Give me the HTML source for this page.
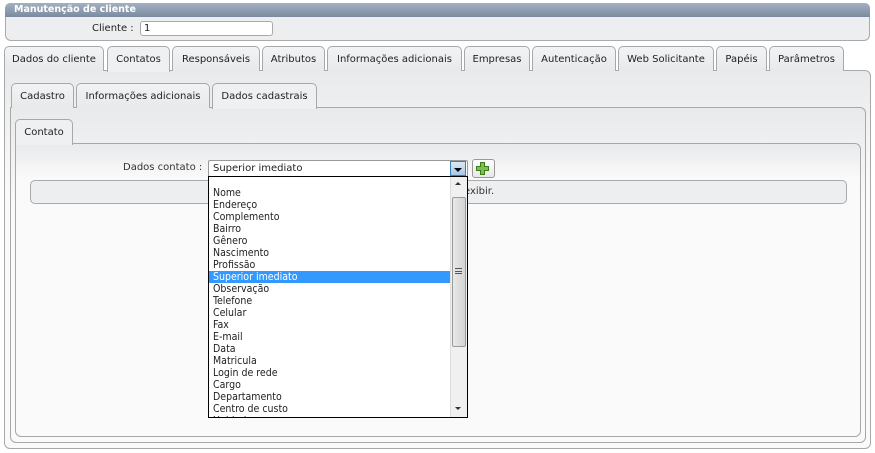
<!DOCTYPE html>
<html><head><meta charset="utf-8"><style>
*{box-sizing:border-box;margin:0;padding:0}
body{width:875px;height:453px;background:#fff;font-family:"DejaVu Sans","Liberation Sans",sans-serif;font-size:10px;color:#222;position:relative;overflow:hidden}
.a{position:absolute;white-space:nowrap}
.title{left:5px;top:3px;width:865px;height:14px;background:linear-gradient(#a3b0bf,#8796aa 70%,#7a8a9f);border-radius:5px 5px 0 0;color:#fff;font-weight:bold;font-size:9.5px;padding-left:9px;line-height:14px}
.hdr{left:5px;top:17px;width:865px;height:24px;background:#eceeef;border:1px solid #aaa;border-top:none;border-radius:0 0 6px 6px}
.tab{position:absolute;height:25px;border:1px solid #a8a8a8;border-bottom:none;border-radius:5px 5px 0 0;background:linear-gradient(#f2f3f4,#e7e9ea);text-align:center;line-height:26px;font-size:10px;color:#222;white-space:nowrap;overflow:hidden}
.tab.on{background:#eff0f1;height:26px;z-index:2}
.pan{position:absolute;border:1px solid #a8a8a8;border-radius:0 6px 6px 6px;background:linear-gradient(#e8eaeb,#fafafa 30%,#fafafa)}
.list div{height:12px;line-height:12px;padding-left:4px;font-size:10.5px;font-family:"DejaVu Sans Condensed","DejaVu Sans",sans-serif;color:#222;white-space:nowrap}
</style></head><body>
<div class="a title">Manutenção de cliente</div>
<div class="a hdr"></div>
<div class="a" style="left:92px;top:23px;font-size:10px">Cliente :</div>
<div class="a" style="left:140px;top:21px;width:133px;height:15px;border:1px solid #aaa;border-radius:3px;background:#fff;font-size:10px;padding-left:3px;line-height:13px">1</div>

<div class="pan" style="left:4px;top:70px;width:867px;height:379px"></div>
<div class="tab" style="left:4px;top:46px;width:100px">Dados do cliente</div>
<div class="tab on" style="left:107px;top:46px;width:63px">Contatos</div>
<div class="tab" style="left:172px;top:46px;width:88px">Responsáveis</div>
<div class="tab" style="left:262px;top:46px;width:63px">Atributos</div>
<div class="tab" style="left:327px;top:46px;width:135px">Informações adicionais</div>
<div class="tab" style="left:464px;top:46px;width:66px">Empresas</div>
<div class="tab" style="left:532px;top:46px;width:84px">Autenticação</div>
<div class="tab" style="left:618px;top:46px;width:96px">Web Solicitante</div>
<div class="tab" style="left:716px;top:46px;width:51px">Papéis</div>
<div class="tab" style="left:769px;top:46px;width:75px">Parâmetros</div>

<div class="pan" style="left:10px;top:107px;width:856px;height:336px"></div>
<div class="tab" style="left:11px;top:83px;width:63px">Cadastro</div>
<div class="tab" style="left:76px;top:83px;width:134px">Informações adicionais</div>
<div class="tab on" style="left:212px;top:83px;width:105px">Dados cadastrais</div>

<div class="pan" style="left:15px;top:143px;width:846px;height:294px;background:linear-gradient(#e8eaeb,#fafafa 12%,#fafafa)"></div>
<div class="tab on" style="left:15px;top:119px;width:58px">Contato</div>

<div class="a" style="left:123px;top:162px;font-size:10px;color:#333">Dados contato :</div>
<div class="a" style="left:208px;top:160px;width:260px;height:17px;border:1px solid #999;border-radius:2px;background:#fff;font-size:10px;padding-left:4px;line-height:15px">Superior imediato</div>
<div class="a" style="left:450px;top:161px;width:16px;height:15px;background:linear-gradient(#dbe8f5,#a8c8e8);border:1px solid #3c7fb1"></div>
<div class="a" style="left:454px;top:168px;width:0;height:0;border-left:4px solid transparent;border-right:4px solid transparent;border-top:4px solid #000"></div>
<div class="a" style="left:472px;top:159px;width:23px;height:19px;border:1px solid #999;border-radius:3px;background:linear-gradient(#fff,#e8e8e8)"></div>
<div class="a" style="left:480px;top:162px;width:5px;height:13px;background:#5fa030;border:1px solid #3d7a1c"></div>
<div class="a" style="left:476px;top:166px;width:13px;height:5px;background:#5fa030;border:1px solid #3d7a1c"></div>
<div class="a" style="left:481px;top:163px;width:3px;height:11px;background:#7cc04a"></div>
<div class="a" style="left:477px;top:167px;width:11px;height:3px;background:#7cc04a"></div>

<div class="a" style="left:30px;top:180px;width:817px;height:24px;border:1px solid #aaa;border-radius:5px;background:#eceeef;font-size:10px;line-height:22px;padding-left:433px;color:#333">exibir.</div>

<div class="a" style="left:208px;top:176px;width:260px;height:242px;background:#fff;border:1px solid #000;overflow:hidden">
<div class="list" style="position:absolute;left:0;top:10px;width:241px">
<div>Nome</div><div>Endereço</div><div>Complemento</div><div>Bairro</div><div>Gênero</div><div>Nascimento</div><div>Profissão</div>
<div style="background:#3399ff;color:#fff">Superior imediato</div>
<div>Observação</div><div>Telefone</div><div>Celular</div><div>Fax</div><div>E-mail</div><div>Data</div><div>Matricula</div><div>Login de rede</div><div>Cargo</div><div>Departamento</div><div>Centro de custo</div><div>Unidade</div>
</div>
<div class="a" style="left:241px;top:0;width:17px;height:240px;background:#f0f0f0;border-left:1px solid #ddd"></div>
<div class="a" style="left:246px;top:5px;width:0;height:0;border-left:3px solid transparent;border-right:3px solid transparent;border-bottom:3px solid #333"></div>
<div class="a" style="left:243px;top:20px;width:14px;height:150px;border:1px solid #999;border-radius:2px;background:linear-gradient(90deg,#e8e8e8,#d4d4d4)"></div>
<div class="a" style="left:246px;top:91px;width:7px;height:6px;border-top:1px solid #555;border-bottom:1px solid #555"></div>
<div class="a" style="left:246px;top:94px;width:7px;height:1px;background:#555"></div>
<div class="a" style="left:246px;top:230px;width:0;height:0;border-left:3px solid transparent;border-right:3px solid transparent;border-top:3px solid #333"></div>
</div>
</body></html>
